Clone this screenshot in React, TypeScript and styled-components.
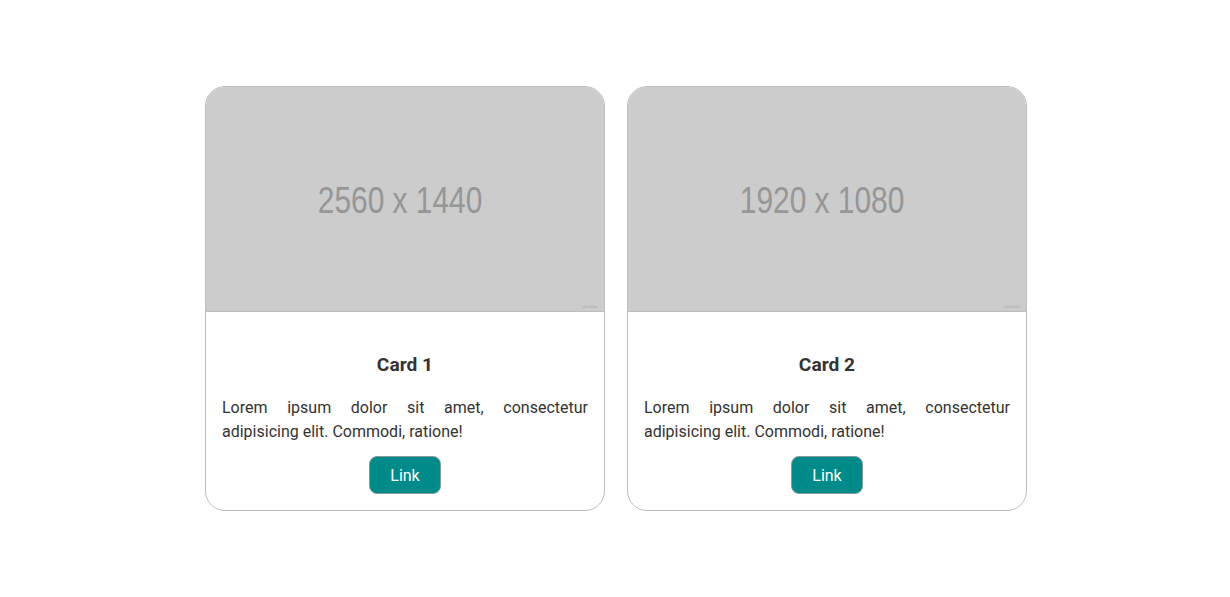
import styled, { createGlobalStyle } from "styled-components";

const GlobalStyle = createGlobalStyle`
	* {
		box-sizing: border-box;
	}
	body {
		margin: 0;
		background: #fff;
		font-family: Roboto, "Liberation Sans", Arial, sans-serif;
		color: #333;
	}
`;

interface CardData {
	title: string;
	size: string;
}

const cards: CardData[] = [
	{ title: "Card 1", size: "2560 x 1440" },
	{ title: "Card 2", size: "1920 x 1080" },
];

function App() {
	return (
		<>
			<GlobalStyle />
			<Page>
				<Row>
					{cards.map((card) => (
						<Card key={card.title}>
							<Thumb>
								<ThumbLabel>{card.size}</ThumbLabel>
								<Credit>placeholder</Credit>
							</Thumb>
							<Body>
								<Title>{card.title}</Title>
								<Text>Lorem ipsum dolor sit amet, consectetur adipisicing elit. Commodi, ratione!</Text>
								<LinkButton>Link</LinkButton>
							</Body>
						</Card>
					))}
				</Row>
			</Page>
		</>
	);
}

export default App;

const Page = styled.div`
	width: 100%;
	height: 100vh;
	display: flex;
	justify-content: center;
	align-items: center;
`;

const Row = styled.div`
	display: flex;
	gap: 22px;
	margin-left: 2px;
`;

const Card = styled.div`
	width: 400px;
	border: 1px solid #bdbdbd;
	border-radius: 20px;
	overflow: hidden;
	display: flex;
	flex-direction: column;
`;

const Thumb = styled.div`
	height: 225px;
	background-color: #cccccc;
	border-bottom: 1px solid #bdbdbd;
	display: flex;
	justify-content: center;
	align-items: center;
	position: relative;
	padding-right: 10px;
	padding-top: 4px;
`;

const ThumbLabel = styled.span`
	font-family: "Liberation Sans", Arial, sans-serif;
	font-size: 36px;
	color: #969696;
	transform: scaleX(0.83);
	white-space: nowrap;
`;

const Credit = styled.span`
	position: absolute;
	right: 6px;
	bottom: 2px;
	font-family: "Liberation Sans", Arial, sans-serif;
	font-size: 3px;
	color: #aaa;
`;

const Body = styled.div`
	padding: 42px 16px 16px;
	display: flex;
	flex-direction: column;
	align-items: center;
`;

const Title = styled.h3`
	margin: 0;
	font-size: 19.2px;
	line-height: 22px;
	font-weight: 700;
	color: #333;
`;

const Text = styled.p`
	margin: 20px 0 12px;
	font-size: 16px;
	line-height: 24px;
	text-align: justify;
	color: #333;
	width: 100%;
`;

const LinkButton = styled.button`
	font-family: Roboto, "Liberation Sans", Arial, sans-serif;
	font-size: 16px;
	line-height: 20px;
	padding: 9px 20px 7px;
	color: #fff;
	background-color: #008b8b;
	border: 1px solid #8a9a9a;
	border-radius: 8px;
	cursor: pointer;
`;
